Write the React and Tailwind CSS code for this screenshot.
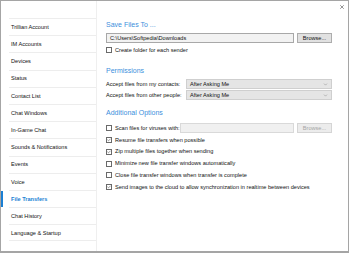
import { X, ChevronDown, Check } from "lucide-react";

const navItems = [
  "Trillian Account",
  "IM Accounts",
  "Devices",
  "Status",
  "Contact List",
  "Chat Windows",
  "In-Game Chat",
  "Sounds & Notifications",
  "Events",
  "Voice",
  "File Transfers",
  "Chat History",
  "Language & Startup",
];

function Box({ checked }) {
  return (
    <span className="w-[6px] h-[6px] border border-[#6a6a6a] bg-white flex items-center justify-center shrink-0">
      {checked && <Check className="w-[6px] h-[6px] text-[#333]" strokeWidth={3} />}
    </span>
  );
}

function CheckRow({ checked, children, className = "" }) {
  return (
    <div className={"flex items-center gap-[3px] h-[11.9px] " + className}>
      <Box checked={checked} />
      <span>{children}</span>
    </div>
  );
}

function Select({ value }) {
  return (
    <div className="w-[146px] h-[10px] bg-[#e5e5e5] border border-[#cfcfcf] flex items-center justify-between pl-[3px] pr-[3px]">
      <span>{value}</span>
      <ChevronDown className="w-[5px] h-[5px] text-[#777]" strokeWidth={2} />
    </div>
  );
}

export default function App() {
  return (
    <div
      className="w-[350px] h-[254px] bg-white text-[#111] overflow-hidden"
      style={{ fontFamily: '"Liberation Sans", Arial, sans-serif' }}
    >
      <div className="w-[349px] h-[253px] border border-b-2 border-[#a5a5a5] flex relative">
        {/* Close */}
        <X className="absolute right-[3px] top-[3px] w-[6px] h-[6px] text-[#555]" strokeWidth={2.5} />

        {/* Sidebar */}
        <div className="w-[96px] border-r border-[#efefef] pt-[17px] text-[5.6px]">
          {navItems.map((item, i) => {
            const active = item === "File Transfers";
            return (
              <div key={item} className="relative h-[17.2px] flex">
                {active && <div className="absolute left-0 top-[1px] w-[2px] h-[16px] bg-[#1a7fd4]" />}
                <div
                  className={
                    "ml-[8px] flex-1 flex items-center pl-[2px] border-t border-[#ededed] " +
                    (i === navItems.length - 1 ? "border-b " : "") +
                    (active ? "text-[#1a7fd4] font-bold" : "")
                  }
                >
                  {item}
                </div>
              </div>
            );
          })}
        </div>

        {/* Content */}
        <div className="flex-1 pl-[9px] pt-[19px] text-[5.6px]">
          <div className="text-[7px] text-[#3d8fdc] h-[13px] leading-[10px]">Save Files To ...</div>
          <div className="flex gap-[3px] items-center">
            <div className="w-[188px] h-[10px] bg-[#f2f2f2] border border-[#a8a8a8] flex items-center pl-[3px]">
              C:\Users\Softpedia\Downloads
            </div>
            <div className="w-[35px] h-[10px] bg-[#e1e1e1] border border-[#adadad] flex items-center justify-center">
              Browse...
            </div>
          </div>
          <CheckRow className="mt-[1px]">Create folder for each sender</CheckRow>

          <div className="text-[7px] text-[#3d8fdc] mt-[10px] h-[13px] leading-[10px]">Permissions</div>
          <div className="flex items-center h-[11px]">
            <span className="w-[80px]">Accept files from my contacts:</span>
            <Select value="After Asking Me" />
          </div>
          <div className="flex items-center h-[11px]">
            <span className="w-[80px]">Accept files from other people:</span>
            <Select value="After Asking Me" />
          </div>

          <div className="text-[7px] text-[#3d8fdc] mt-[7px] h-[13px] leading-[10px]">Additional Options</div>
          <div className="flex items-center h-[11.9px] mt-[1px]">
            <div className="flex items-center gap-[3px] w-[74px]">
              <Box />
              <span>Scan files for viruses with:</span>
            </div>
            <div className="w-[114px] h-[10px] bg-[#f0f0f0] border border-[#d9d9d9]" />
            <div className="ml-[3px] w-[35px] h-[10px] bg-[#ececec] border border-[#d5d5d5] flex items-center justify-center text-[#a5a5a5]">
              Browse...
            </div>
          </div>
          <CheckRow checked>Resume file transfers when possible</CheckRow>
          <CheckRow checked>Zip multiple files together when sending</CheckRow>
          <CheckRow>Minimize new file transfer windows automatically</CheckRow>
          <CheckRow>Close file transfer windows when transfer is complete</CheckRow>
          <CheckRow checked>Send images to the cloud to allow synchronization in realtime between devices</CheckRow>
        </div>
      </div>
    </div>
  );
}
